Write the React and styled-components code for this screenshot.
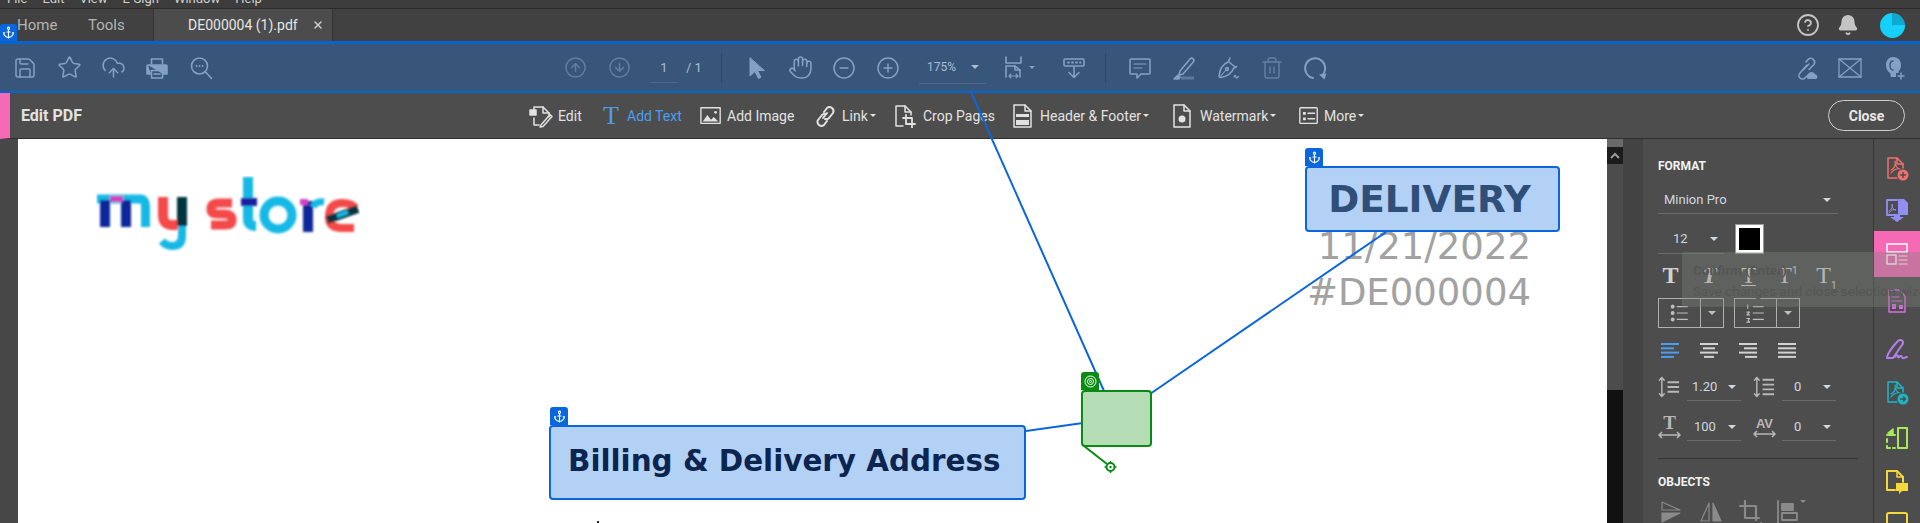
import React from "react";
import styled, { createGlobalStyle } from "styled-components";
import {
  Anchor,
  ArrowDownCircle,
  ArrowUpCircle,
  Bell,
  CircleHelp,
  CircleMinus,
  CirclePlus,
  CloudUpload,
  Hand,
  Save,
  Star,
  Trash2,
  X,
} from "lucide-react";

const GlobalStyle = createGlobalStyle`
  html, body {
    margin: 0;
    height: 523px;
    overflow: hidden;
    background: #4a4a4a;
  }
  * { box-sizing: border-box; }
`;

const Glyph = ({ size = 24, stroke = 1.6, children }) => (
  <svg
    width={size}
    height={size}
    viewBox="0 0 24 24"
    fill="none"
    stroke="currentColor"
    strokeWidth={stroke}
    strokeLinecap="round"
    strokeLinejoin="round"
  >
    {children}
  </svg>
);

const Shell = styled.div`
  width: 1920px;
  height: 523px;
  position: relative;
  overflow: hidden;
  display: flex;
  flex-direction: column;
  font-family: Roboto, "Liberation Sans", sans-serif;
`;

const MenuBar = styled.div`
  height: 9px;
  background: #3c3c3c;
  border-bottom: 1px solid #2b2b2b;
  overflow: hidden;
  display: flex;
  gap: 15px;
  padding-left: 7px;
  color: #d0d0d0;
  font-size: 13px;
  line-height: 14px;
  span {
    margin-top: -8px;
  }
`;

const TabBar = styled.div`
  height: 32px;
  background: #414141;
  display: flex;
  align-items: center;
  padding-left: 17px;
  padding-right: 15px;
  font-size: 15px;
  color: #b4b4b4;
`;

const NavTab = styled.div`
  width: 71px;
`;

const FileTab = styled.div`
  width: 180px;
  height: 100%;
  margin-left: -6px;
  background: #4c4c4c;
  border-left: 1px solid #333;
  border-right: 1px solid #333;
  display: flex;
  align-items: center;
  justify-content: space-between;
  padding: 0 8px 0 34px;
  color: #e4e4e4;
  font-size: 14px;
`;

const TopIcons = styled.div`
  margin-left: auto;
  display: flex;
  align-items: center;
  gap: 17px;
  color: #c4c4c4;
`;

const Avatar = styled.div`
  width: 25px;
  height: 25px;
  border-radius: 50%;
  margin-left: 4px;
  background: conic-gradient(#10a8cc 0 25%, #14d0fa 25% 100%);
`;

const Toolbar = styled.div`
  height: 52px;
  position: relative;
  background: #38567a;
  border-top: 3px solid #0a62cc;
  border-bottom: 2px solid #0a62cc;
  display: flex;
  align-items: stretch;
  padding-left: 3px;
  color: #84a0c4;
`;

const AnchorTag = styled.div`
  position: absolute;
  width: ${(p) => p.$size || 18}px;
  height: ${(p) => p.$size || 18}px;
  background: ${(p) => p.$color || "#0a66dc"};
  border-radius: 3px 3px 0 0;
  color: #fff;
  display: flex;
  align-items: center;
  justify-content: center;
  left: ${(p) => p.$left ?? -1}px;
  top: ${(p) => p.$top ?? -20}px;
`;

const ToolGroup = styled.div`
  display: flex;
  align-items: stretch;
  margin-left: ${(p) => p.$offset || 0}px;
`;

const ToolButton = styled.div`
  width: 44px;
  display: flex;
  align-items: center;
  justify-content: center;
  gap: 2px;
  margin-left: ${(p) => p.$gap || 0}px;
  color: ${(p) => (p.$dim ? "#617fa5" : "inherit")};
`;

const PageInfo = styled.div`
  width: 62px;
  margin-left: 9px;
  display: flex;
  align-items: center;
  gap: 8px;
  color: #a9bcd6;
  font-size: 13px;
`;

const PageNumber = styled.span`
  width: 28px;
  height: 27px;
  text-align: center;
  line-height: 23px;
  border-bottom: 1px solid #4a688e;
  margin-top: 4px;
`;

const ToolSeparator = styled.div`
  width: 1px;
  margin: 9px 12px 8px 9px;
  background: #2b4565;
`;

const ZoomField = styled.div`
  width: 68px;
  height: 33px;
  margin: 7px 0 0 9px;
  padding: 0 8px;
  display: flex;
  align-items: center;
  justify-content: space-between;
  border-bottom: 1px solid #4a688e;
  color: #a9bcd6;
  font-size: 12px;
`;

const Caret = styled.i`
  display: block;
  flex: none;
  width: 0;
  height: 0;
  border-left: ${(p) => p.$size || 4}px solid transparent;
  border-right: ${(p) => p.$size || 4}px solid transparent;
  border-top: ${(p) => p.$size || 4}px solid ${(p) => p.$color || "currentColor"};
`;

const EditBar = styled.div`
  height: 46px;
  display: flex;
  align-items: center;
  background: #4d4d4d;
  border-left: 10px solid #f569b5;
  border-bottom: 1px solid #2f2f2f;
  color: #e2e2e2;
  font-size: 14px;
`;

const EditTitle = styled.div`
  width: 519px;
  padding-left: 11px;
  font-size: 16px;
  font-weight: 700;
`;

const EditItem = styled.div`
  flex: none;
  width: ${(p) => p.$width}px;
  display: flex;
  align-items: center;
  gap: 2px;
  white-space: nowrap;
  color: ${(p) => (p.$active ? "#4c9df0" : "inherit")};
`;

const EditSlot = styled.div`
  flex: none;
  width: ${(p) => p.$width}px;
  margin-left: ${(p) => p.$nudge || 0}px;
  margin-right: -2px;
  display: flex;
  align-items: center;
`;

const AddTextGlyph = styled.span`
  font-family: "Liberation Serif", serif;
  font-size: 26px;
  line-height: 26px;
`;

const CloseButton = styled.div`
  width: 77px;
  height: 31px;
  margin-left: auto;
  margin-right: 15px;
  border: 1px solid #cfcfcf;
  border-radius: 16px;
  display: flex;
  align-items: center;
  justify-content: center;
  font-weight: 700;
  color: #e8e8e8;
`;

const Workspace = styled.div`
  flex: 1;
  display: flex;
  overflow: hidden;
`;

const LeftGutter = styled.div`
  width: 18px;
  background: #474747;
`;

const Page = styled.div`
  width: 1589px;
  position: relative;
  background: #fff;
`;

const DocHeader = styled.div`
  display: flex;
  justify-content: space-between;
  align-items: flex-start;
  padding: 37px 76px 0 78px;
`;

const DocMeta = styled.div`
  margin-top: 48px;
  text-align: right;
  font-family: "DejaVu Sans", sans-serif;
  font-size: 37px;
  line-height: 46px;
  color: #a2a2a2;
`;

const DocMark = styled.div`
  width: 2px;
  height: 2px;
  margin: 205px 0 0 579px;
  background: #222;
`;

const Annotation = styled.div`
  position: absolute;
  z-index: 3;
  left: ${(p) => p.$left}px;
  top: ${(p) => p.$top}px;
  width: ${(p) => p.$width}px;
  height: ${(p) => p.$height}px;
  display: flex;
  align-items: center;
  justify-content: ${(p) => (p.$center ? "center" : "flex-start")};
  padding-left: ${(p) => p.$pad || 0}px;
  padding-right: ${(p) => p.$padRight || 0}px;
  padding-bottom: ${(p) => p.$lift || 0}px;
  background: #b3d1f5;
  border: 2px solid #0a66dc;
  border-radius: 4px;
  font-family: "DejaVu Sans", sans-serif;
  font-weight: 700;
  font-size: ${(p) => p.$font}px;
  color: ${(p) => p.$ink};
`;

const TargetBox = styled(Annotation)`
  background: #b5ddb5;
  border-color: #0a8a12;
`;

const Scroller = styled.div`
  width: 16px;
  background: #111;
  display: flex;
  flex-direction: column;
`;

const ScrollCap = styled.div`
  height: 8px;
  background: #6a6a6a;
`;

const ScrollArrow = styled.div`
  height: 17px;
  background: #1c1c1c;
  color: #999;
  display: flex;
  align-items: center;
  justify-content: center;
`;

const ScrollThumb = styled.div`
  height: 226px;
  background: #4c4c4c;
`;

const SideGutter = styled.div`
  width: 20px;
  background: #434343;
`;

const FormatPanel = styled.div`
  width: 230px;
  padding: 0 15px;
  background: #4d4d4d;
  color: #cfd6dc;
  font-size: 13px;
`;

const SectionTitle = styled.div`
  margin-top: ${(p) => p.$top}px;
  height: 14px;
  line-height: 14px;
  font-size: 12px;
  font-weight: 700;
  color: #f2f2f2;
`;

const Dropdown = styled.div`
  width: ${(p) => p.$width}px;
  height: ${(p) => p.$height || 28}px;
  display: flex;
  align-items: center;
  justify-content: space-between;
  padding: 0 ${(p) => p.$right || 6}px 0 ${(p) => p.$left || 6}px;
  border-bottom: 1px solid #6a6a6a;
  color: #cfd8e0;
`;

const FontRow = styled(Dropdown)`
  margin-top: 13px;
`;

const Row = styled.div`
  display: flex;
  align-items: ${(p) => p.$align || "center"};
  gap: ${(p) => p.$gap || 0}px;
  height: ${(p) => p.$height}px;
  margin-top: ${(p) => p.$top}px;
  margin-left: ${(p) => p.$shift || 0}px;
`;

const Swatch = styled.div`
  width: 29px;
  height: 30px;
  background: #000;
  border: 4px solid #fff;
  outline: 1px solid #999;
  outline-offset: -1px;
`;

const StyleCell = styled.div`
  width: 39px;
  display: flex;
  justify-content: center;
  color: ${(p) => (p.$active ? "#4c9df0" : "#d2d2d2")};
`;

const StyleT = styled.span`
  position: relative;
  font-family: "Liberation Serif", serif;
  font-size: 24px;
  line-height: 26px;
  font-weight: ${(p) => (p.$bold ? 700 : 400)};
  font-style: ${(p) => (p.$italic ? "italic" : "normal")};
  text-decoration: ${(p) => (p.$under ? "underline" : "none")};
  text-underline-offset: 2px;
  text-decoration-thickness: 1px;
  sup, sub {
    font-family: Roboto, sans-serif;
    font-size: 10px;
    line-height: 0;
  }
`;

const ListBox = styled.div`
  width: 66px;
  height: 30px;
  display: grid;
  grid-template-columns: 41px 1fr;
  border: 1px solid #b0b0b0;
  color: #bdbdbd;
  > div {
    display: flex;
    align-items: center;
    justify-content: center;
  }
  > div + div {
    border-left: 1px solid #b0b0b0;
  }
`;

const SpacingIcon = styled.div`
  width: 23px;
  margin-left: ${(p) => p.$left || 0}px;
  margin-right: 6px;
  color: #b8b8b8;
  display: flex;
  justify-content: center;
`;

const Divider = styled.div`
  width: 200px;
  height: 1px;
  margin-top: 17px;
  background: #363636;
`;

const ObjectIcon = styled.div`
  width: 40px;
  color: #8a8a8a;
  display: flex;
  justify-content: center;
`;

const Rail = styled.div`
  width: 47px;
  padding-top: 10px;
  background: #4d4d4d;
  border-left: 1px solid #383838;
`;

const RailItem = styled.div`
  height: ${(p) => p.$h}px;
  display: flex;
  align-items: center;
  justify-content: center;
  color: ${(p) => p.$color};
  background: ${(p) => p.$bg || "none"};
`;

const HintBox = styled.div`
  position: absolute;
  z-index: 5;
  left: 1682px;
  top: 252px;
  width: 238px;
  height: 55px;
  padding: 8px 0 0 11px;
  background: rgba(125, 132, 125, 0.36);
  color: #565656;
  font-size: 13.5px;
  white-space: nowrap;
  line-height: 21px;
  strong {
    display: block;
    font-size: 13.5px;
  }
`;

const Connectors = styled.svg`
  position: absolute;
  z-index: 2;
  left: 0;
  top: 0;
  pointer-events: none;
`;

// logo is a picture in the pdf, so it is soft like a scaled bitmap
const Logo = () => (
  <svg width="264" height="78" viewBox="0 0 264 78" fill="none" strokeLinecap="butt">
    <defs>
      <filter id="soft">
        <feGaussianBlur stdDeviation="0.8" />
      </filter>
    </defs>
    <g filter="url(#soft)">
      <path d="M1 23 H44 Q49.500 23 49.500 30 V51" stroke="#14b8e6" strokeWidth="9" />
      <path d="M9 24 V51 M30 24 V51" stroke="#10259c" strokeWidth="10" />
      <path d="M14 23 H27" stroke="#d042c0" strokeWidth="6" />
      <path d="M67 21 V39 Q67 49 76 49 H84" stroke="#f4484a" strokeWidth="10" />
      <path d="M86 21 V50" stroke="#06363f" strokeWidth="10" />
      <path d="M86 50 V60 Q86 70 76 70 Q70 70 66 65" stroke="#14b8e6" strokeWidth="8" />
      <path d="M136 27 H122 Q115 27 115 33 Q115 38 122 38 H129 Q136 38 136 44 Q136 49 129 49 H115" stroke="#f4484a" strokeWidth="9" />
      <path d="M152 1 V43 Q152 50 160 50" stroke="#14b8e6" strokeWidth="10" />
      <path d="M145 26 H161" stroke="#1a1aa0" strokeWidth="8" />
      <circle cx="182" cy="39" r="14" stroke="#14b8e6" strokeWidth="9" />
      <path d="M212 25 V56" stroke="#10259c" strokeWidth="10" />
      <path d="M204 26 H212" stroke="#d042c0" strokeWidth="6" />
      <path d="M217 31 Q220 25 228 26" stroke="#14b8e6" strokeWidth="7" />
      <path d="M233 41 Q233 27 246 27 Q256 27 259 32 M233 41 Q233 52 246 52 H258" stroke="#f4484a" strokeWidth="8" />
      <path d="M231 44 L262 33" stroke="#06363f" strokeWidth="8" />
      <path d="M241 40 L252 36" stroke="#14b8e6" strokeWidth="4" />
    </g>
  </svg>
);

const PrintIcon = () => (
  <Glyph>
    <path d="M6.5 8V3h11v5" />
    <path d="M3 9h18a1 1 0 0 1 1 1v8h-4M6 18H2v-8a1 1 0 0 1 1-1" fill="currentColor" />
    <path d="M6.5 14.5h11V22h-11z" />
    <path d="M9 18h6" />
  </Glyph>
);

const FindIcon = () => (
  <Glyph>
    <circle cx="10.5" cy="10" r="8" />
    <path d="M16.5 16l6 6.5" />
    <path d="M7.5 10h.1M10.5 10h.1M13.5 10h.1" strokeWidth="1.8" />
  </Glyph>
);

const PointerIcon = () => (
  <Glyph stroke={1}>
    <path d="M6 2v18l5-4.5 3.5 7 2.5-1.3-3.4-6.7H20z" fill="currentColor" />
  </Glyph>
);

const FitIcon = () => (
  <Glyph>
    <path d="M3 1v6h15V1" />
    <path d="M3 21V10h9l5 4v7" />
    <path d="M12 10v4h5" />
    <path d="M6 20h9M6 20l2-2M6 20l2 2M15 20l-2-2M15 20l-2 2" strokeWidth="1.1" />
  </Glyph>
);

const SnapIcon = () => (
  <Glyph>
    <rect x="2" y="3" width="20" height="7" rx="1" />
    <path d="M6 6.5h1M10 6.5h1M14 6.5h1M18 6.5h.5" strokeWidth="1.8" />
    <path d="M12 11v10M7 16.5l5 5 5-5" />
  </Glyph>
);

const CommentIcon = () => (
  <Glyph>
    <path d="M3 3h18a1 1 0 0 1 1 1v13a1 1 0 0 1-1 1h-8l-4 4v-4H3a1 1 0 0 1-1-1V4a1 1 0 0 1 1-1z" />
    <path d="M6 8h12M6 12h8" strokeWidth="1.2" />
  </Glyph>
);

const MarkerIcon = () => (
  <Glyph>
    <path d="M8 15L18 3a2.2 2.2 0 0 1 3.3 3L11 18l-4 1z" />
    <path d="M2 23l4-4 2 2-1 2z" fill="currentColor" />
    <path d="M9 22h13" stroke="#5a7aa0" strokeWidth="3" strokeLinecap="butt" />
  </Glyph>
);

const SignIcon = () => (
  <Glyph>
    <path d="M14 2l-2 4c-5 2-8 6-9 14 0 1 .5 1.5 1.5 1.5 7-1 11-4 13-9l3-2" />
    <path d="M13 6l6 5" />
    <path d="M4 21l6-7" strokeWidth="1.1" />
    <circle cx="11" cy="13" r="1.4" />
    <path d="M18 21c1-2 1.5-2 2 0s1 1 2.5-.5" strokeWidth="1.3" />
  </Glyph>
);

const RotateIcon = () => (
  <Glyph stroke={2}>
    <path d="M18.5 19a10 10 0 1 0-9.5 3" />
    <path d="M15 18.5l7.5-1-2 6z" fill="currentColor" stroke="none" />
  </Glyph>
);

const ShareIcon = () => (
  <Glyph>
    <path d="M12 6l2.5-3a4 4 0 0 1 5.5 5.500L15 13.500" />
    <path d="M13 9l-7 8a3.500 3.500 0 0 0 5 5l2-2" />
    <path d="M9 14l6-6" />
    <path d="M14 23a3 3 0 0 1 0-5 4 4 0 0 1 7 0 3 3 0 0 1 1.500 5z" fill="currentColor" stroke="none" />
  </Glyph>
);

const EnvelopeIcon = () => (
  <Glyph stroke={1.3}>
    <rect x="1" y="3" width="22" height="18" />
    <path d="M1 3l22 18M23 3L1 21" />
  </Glyph>
);

const InviteIcon = () => (
  <Glyph>
    <path
      d="M11 1c5.500 0 8 4 8 8 0 3-1 5-2.500 6.500V17H14v4H9l-1-4c-3-2-4-5-4-8 0-4.500 3-8 7-8z"
      fill="currentColor"
      stroke="none"
    />
    <path d="M11 5c-2 0-3 2-3 4.500S9 14 11 14" stroke="#38567a" strokeWidth="1.4" />
    <path d="M19 17v6M16 20h6" strokeWidth="1.5" />
  </Glyph>
);

const EditDocIcon = () => (
  <Glyph size={24} stroke={1.5}>
    <path d="M5 9V3h9l6 6v4" />
    <path d="M14 3v6h6" />
    <path d="M1 6h6v5H1z" fill="currentColor" />
    <path d="M5 14v7h5" />
    <path d="M12 21l-1 2 3-.5 9-10-2-2z" />
  </Glyph>
);

const ImageIcon = () => (
  <Glyph size={22} stroke={1.5}>
    <rect x="1" y="3" width="21" height="17" />
    <path d="M3 18l5-7 4 5 3-3 5 5z" fill="currentColor" stroke="none" />
    <circle cx="17" cy="8" r="1.500" fill="currentColor" stroke="none" />
  </Glyph>
);

const LinkIcon = () => (
  <Glyph size={24} stroke={2}>
    <path d="M10 14l4-5" />
    <path d="M11 8l3-4a4 4 0 0 1 6 5l-4 5a4 4 0 0 1-4 1" />
    <path d="M13 10a4 4 0 0 0-4 1l-4 5a4 4 0 0 0 6 5l3-4" />
  </Glyph>
);

const CropDocIcon = () => (
  <Glyph size={24} stroke={1.5}>
    <path d="M10 22H3V2h9l6 6v3" />
    <path d="M12 2v6h6" />
    <path d="M13 11v9h9M10 14h9v10" strokeWidth="1.800" />
  </Glyph>
);

const HeaderDocIcon = () => (
  <Glyph size={24} stroke={1.5}>
    <path d="M3 1h11l6 6v16H3z" />
    <path d="M14 1v6h6" />
    <path d="M5 10h13v3H5z M5 16h13v5H5z" fill="currentColor" stroke="none" />
  </Glyph>
);

const WatermarkIcon = () => (
  <Glyph size={24} stroke={1.5}>
    <path d="M4 1h10l6 6v16H4z" />
    <path d="M14 1v6h6" />
    <circle cx="12" cy="15" r="3.500" fill="currentColor" stroke="none" />
  </Glyph>
);

const MoreIcon = () => (
  <Glyph size={22} stroke={1.5}>
    <rect x="2" y="3" width="19" height="17" rx="1" />
    <path d="M5.500 7.500h3v3h-3zM5.500 13.500h3v3h-3z" fill="currentColor" stroke="none" />
    <path d="M11 9h7M11 15h7" strokeWidth="1.800" />
  </Glyph>
);

const BulletList = () => (
  <Glyph size={22} stroke={1.3}>
    <circle cx="4" cy="5" r="1.500" fill="currentColor" />
    <circle cx="4" cy="12" r="1.500" fill="currentColor" />
    <circle cx="4" cy="19" r="1.500" fill="currentColor" />
    <path d="M9 5h11M9 12h11M9 19h11" />
  </Glyph>
);

const NumberList = () => (
  <Glyph size={22} stroke={1.3}>
    <path d="M3 3v4M2 11h3l-3 3h3M2 18h3l-1.500 2 1.500 2H2" strokeWidth="1.200" />
    <path d="M9 5h11M9 12h11M9 19h11" />
  </Glyph>
);

const AlignIcon = ({ lines }) => (
  <svg width="19" height="15" viewBox="0 0 19 15" fill="none" stroke="currentColor" strokeWidth="2">
    {lines.map(([x1, x2], i) => (
      <path key={i} d={`M${x1} ${1 + i * 4.3}H${x2}`} />
    ))}
  </svg>
);

const LineSpacingIcon = ({ thick }) => (
  <Glyph size={24} stroke={1.500}>
    <path d="M4 3v18M1.500 5L4 2l2.500 3M1.500 19L4 22l2.500-3" />
    <path
      d={thick ? "M10 4.500h12M10 9.500h12M10 14.500h12M10 19.500h12" : "M10 7h12M10 12h12M10 17h12"}
      strokeWidth="2"
      strokeLinecap="butt"
    />
  </Glyph>
);

const ScaleLabel = styled.div`
  display: flex;
  flex-direction: column;
  align-items: center;
  font-family: "Liberation Serif", serif;
  font-weight: 700;
  font-size: 19px;
  line-height: 16px;
  svg {
    display: block;
  }
`;

const KernLabel = styled(ScaleLabel)`
  font-family: "Liberation Sans", sans-serif;
  font-size: 13px;
  line-height: 13px;
`;

const WidthArrow = () => (
  <svg width="23" height="8" viewBox="0 0 23 8" fill="none" stroke="currentColor" strokeWidth="1.500">
    <path d="M1 4h21M4 1L1 4l3 3M19 1l3 3-3 3" />
  </svg>
);

const FlipIcon = ({ side }) => (
  <Glyph size={24} stroke={1.200}>
    {side ? (
      <>
        <path d="M10 3L2 21h8z" />
        <path d="M14 3l8 18h-8z" fill="currentColor" />
      </>
    ) : (
      <>
        <path d="M3 2l18 8H3z" />
        <path d="M3 13h18L3 22z" fill="currentColor" />
      </>
    )}
  </Glyph>
);

const CropIcon = () => (
  <Glyph size={24} stroke={2.200}>
    <path d="M6 1v17h14M1 6h16v14" />
    <path d="M22 23h.1" />
  </Glyph>
);

const ArrangeIcon = () => (
  <Glyph size={24} stroke={1.800}>
    <path d="M2 1v23" />
    <path d="M6 4h11v6H6z" fill="currentColor" />
    <path d="M6 13h15v7H6z" />
  </Glyph>
);

const PdfMark = () => <path d="M6 13c3-1 5-5 4-9 0 4 2 8 5 8-3-1-7 1-9 4" strokeWidth="1.200" />;

const railItems = [
  {
    h: 40,
    color: "#f07070",
    icon: (
      <>
        <path d="M12 21H3V1h9l6 6v4" />
        <path d="M12 1v6h6" />
        <PdfMark />
        <circle cx="18" cy="18" r="5.500" fill="currentColor" stroke="none" />
        <path d="M18 15.500v5M15.500 18h5" stroke="#4d4d4d" />
      </>
    ),
  },
  {
    h: 42,
    color: "#8f8ff5",
    icon: (
      <>
        <path d="M12 17H2V2h10" strokeWidth="1.800" />
        <path d="M4 13c2-1 4-4 3-7 0 3 1 6 4 6-3-1-5 0-7 3" strokeWidth="1" />
        <path d="M13 1h6l4 4v12H13z" fill="currentColor" stroke="none" />
        <path d="M9 17h6v2h4l-7 5-7-5h4z" fill="currentColor" stroke="none" />
      </>
    ),
  },
  {
    h: 46,
    color: "#fff",
    bg: "#f569b5",
    icon: (
      <>
        <rect x="2" y="2" width="20" height="8" />
        <rect x="2" y="13" width="9" height="9" />
        <path d="M14 14h8M14 18h8M14 22h8" strokeWidth="1.100" />
      </>
    ),
  },
  {
    h: 48,
    color: "#d86be0",
    icon: (
      <>
        <path d="M4 1h10l6 6v16H4z" />
        <path d="M7 8h7M7 12h10" strokeWidth="1.200" />
        <path d="M7 15h4v5H7z M14 16h4v4h-4z" fill="currentColor" stroke="none" />
      </>
    ),
  },
  {
    h: 47,
    color: "#b47fe8",
    icon: (
      <>
        <path d="M2 21c0-4 6-12 11-17 3-3 7 1 4 4-3 4-6 9-9 13z" strokeWidth="2" />
        <path d="M10 20c2-3 3-2 3 0s3-3 4 0 3 0 5 0" strokeWidth="2" />
      </>
    ),
  },
  {
    h: 42,
    color: "#1cb6c6",
    icon: (
      <>
        <path d="M12 21H3V1h9l6 6v4" />
        <path d="M12 1v6h6" />
        <PdfMark />
        <circle cx="18" cy="18" r="5.500" fill="currentColor" stroke="none" />
        <path d="M15.500 18h5M18.500 16l2 2-2 2" stroke="#4d4d4d" />
      </>
    ),
  },
  {
    h: 48,
    color: "#a8e85a",
    icon: (
      <>
        <rect x="13" y="2" width="9" height="20" strokeWidth="2" />
        <path d="M2 9h8M2 13v3M2 20v2h3M8 22h2" strokeWidth="2" />
        <path d="M8 3L3 7l5 1z" fill="currentColor" />
      </>
    ),
  },
  {
    h: 40,
    color: "#f5d83a",
    icon: (
      <>
        <path d="M10 20H2V1h10l6 6v5" strokeWidth="2" />
        <path d="M12 1v6h6" />
        <path d="M11 13h12v8h-6l-3 3v-3h-3z" fill="currentColor" stroke="none" />
      </>
    ),
  },
  {
    h: 42,
    color: "#f5d83a",
    icon: <rect x="2" y="2" width="20" height="20" rx="2" strokeWidth="2" />,
  },
];

const aligns = [
  [[0, 18], [0, 13], [0, 18], [0, 13]],
  [[0, 18], [3, 15], [0, 18], [4, 14]],
  [[0, 18], [5, 18], [0, 18], [6, 18]],
  [[0, 18], [0, 18], [0, 18], [0, 18]],
];

const App = () => {
  return (
    <Shell>
      <GlobalStyle />
      <MenuBar>
        <span>File</span>
        <span>Edit</span>
        <span>View</span>
        <span>E-Sign</span>
        <span>Window</span>
        <span>Help</span>
      </MenuBar>
      <TabBar>
        <NavTab>Home</NavTab>
        <NavTab>Tools</NavTab>
        <FileTab>
          DE000004 (1).pdf
          <X size={12} strokeWidth={3} color="#ccc" />
        </FileTab>
        <TopIcons>
          <CircleHelp size={24} strokeWidth={1.8} />
          <Bell size={22} fill="currentColor" />
          <Avatar />
        </TopIcons>
      </TabBar>
      <Toolbar>
        <AnchorTag $left={0} $size={17}>
          <Anchor size={13} />
        </AnchorTag>
        <ToolGroup>
          <ToolButton><Save size={24} strokeWidth={1.5} /></ToolButton>
          <ToolButton><Star size={25} strokeWidth={1.5} /></ToolButton>
          <ToolButton><CloudUpload size={25} strokeWidth={1.5} /></ToolButton>
          <ToolButton><PrintIcon /></ToolButton>
          <ToolButton><FindIcon /></ToolButton>
        </ToolGroup>
        <ToolGroup $offset={330}>
          <ToolButton $dim><ArrowUpCircle size={23} strokeWidth={1.5} /></ToolButton>
          <ToolButton $dim><ArrowDownCircle size={23} strokeWidth={1.5} /></ToolButton>
          <PageInfo>
            <PageNumber>1</PageNumber>
            <span>/ 1</span>
          </PageInfo>
          <ToolSeparator />
          <ToolButton><PointerIcon /></ToolButton>
          <ToolButton><Hand size={25} strokeWidth={1.5} /></ToolButton>
          <ToolButton><CircleMinus size={24} strokeWidth={1.5} /></ToolButton>
          <ToolButton><CirclePlus size={24} strokeWidth={1.5} /></ToolButton>
          <ZoomField>
            175%
            <Caret />
          </ZoomField>
          <ToolButton $gap={10}>
            <FitIcon />
            <Caret $size={3} />
          </ToolButton>
          <ToolButton $gap={11}><SnapIcon /></ToolButton>
          <ToolSeparator />
          <ToolButton><CommentIcon /></ToolButton>
          <ToolButton><MarkerIcon /></ToolButton>
          <ToolButton><SignIcon /></ToolButton>
          <ToolButton $dim><Trash2 size={24} strokeWidth={1.5} /></ToolButton>
          <ToolButton><RotateIcon /></ToolButton>
        </ToolGroup>
        <ToolGroup $offset={446}>
          <ToolButton><ShareIcon /></ToolButton>
          <ToolButton><EnvelopeIcon /></ToolButton>
          <ToolButton><InviteIcon /></ToolButton>
        </ToolGroup>
      </Toolbar>
      <EditBar>
        <EditTitle>Edit PDF</EditTitle>
        <EditItem $width={74}><EditSlot $width={29}><EditDocIcon /></EditSlot>Edit</EditItem>
        <EditItem $width={97} $active><EditSlot $width={24}><AddTextGlyph>T</AddTextGlyph></EditSlot>Add Text</EditItem>
        <EditItem $width={113}><EditSlot $width={27}><ImageIcon /></EditSlot>Add Image</EditItem>
        <EditItem $width={83}><EditSlot $width={29}><LinkIcon /></EditSlot>Link<Caret $size={3} /></EditItem>
        <EditItem $width={118}><EditSlot $width={30} $nudge={-3}><CropDocIcon /></EditSlot>Crop Pages</EditItem>
        <EditItem $width={160}><EditSlot $width={29} $nudge={-3}><HeaderDocIcon /></EditSlot>Header &amp; Footer<Caret $size={3} /></EditItem>
        <EditItem $width={124}><EditSlot $width={30} $nudge={-4}><WatermarkIcon /></EditSlot>Watermark<Caret $size={3} /></EditItem>
        <EditItem $width={80}><EditSlot $width={26}><MoreIcon /></EditSlot>More<Caret $size={3} /></EditItem>
        <CloseButton>Close</CloseButton>
      </EditBar>
      <Workspace>
        <LeftGutter />
        <Page>
          <DocHeader>
            <Logo />
            <DocMeta>
              <div>11/21/2022</div>
              <div>#DE000004</div>
            </DocMeta>
          </DocHeader>
          <DocMark />
          <Annotation $left={1287} $top={27} $width={255} $height={66} $font={37.4} $ink="#2f4f78" $center $padRight={6}>
            <AnchorTag $size={18} $top={-20} $left={-2}>
              <Anchor size={13} />
            </AnchorTag>
            DELIVERY
          </Annotation>
          <Annotation $left={531} $top={286} $width={477} $height={75} $font={29.4} $ink="#0b2550" $pad={17} $lift={3}>
            <AnchorTag $size={18} $top={-20} $left={-1}>
              <Anchor size={13} />
            </AnchorTag>
            Billing &amp; Delivery Address
          </Annotation>
          <TargetBox $left={1063} $top={251} $width={71} $height={57}>
            <AnchorTag $size={18} $top={-20} $left={-2} $color="#0a8a12">
              <svg width="13" height="13" viewBox="0 0 13 13" fill="none" stroke="#fff" strokeWidth="1">
                <circle cx="6.500" cy="6.500" r="5.500" />
                <circle cx="6.500" cy="6.500" r="3" />
                <circle cx="6.500" cy="6.500" r="1" />
              </svg>
            </AnchorTag>
          </TargetBox>
        </Page>
        <Scroller>
          <ScrollCap />
          <ScrollArrow>
            <svg width="10" height="7" viewBox="0 0 10 7" fill="none" stroke="currentColor" strokeWidth="2">
              <path d="M1 6l4-4 4 4" />
            </svg>
          </ScrollArrow>
          <ScrollThumb />
        </Scroller>
        <SideGutter />
        <FormatPanel>
          <SectionTitle $top={20}>FORMAT</SectionTitle>
          <FontRow $width={180} $right={7}>
            Minion Pro
            <Caret $size={4} />
          </FontRow>
          <Row $height={30} $top={10} $gap={11}>
            <Dropdown $width={66} $height={30} $left={15} $right={6}>
              12
              <Caret />
            </Dropdown>
            <Swatch />
          </Row>
          <Row $height={30} $top={6} $shift={-7}>
            <StyleCell><StyleT $bold>T</StyleT></StyleCell>
            <StyleCell><StyleT $italic $bold>T</StyleT></StyleCell>
            <StyleCell><StyleT $under>T</StyleT></StyleCell>
            <StyleCell><StyleT>T<sup>1</sup></StyleT></StyleCell>
            <StyleCell><StyleT>T<sub>1</sub></StyleT></StyleCell>
          </Row>
          <Row $height={30} $top={8} $gap={10}>
            <ListBox>
              <div><BulletList /></div>
              <div><Caret /></div>
            </ListBox>
            <ListBox>
              <div><NumberList /></div>
              <div><Caret /></div>
            </ListBox>
          </Row>
          <Row $height={15} $top={15} $shift={-7}>
            {aligns.map((lines, i) => (
              <StyleCell key={i} $active={i === 0}>
                <AlignIcon lines={lines} />
              </StyleCell>
            ))}
          </Row>
          <Row $height={28} $top={15}>
            <SpacingIcon><LineSpacingIcon /></SpacingIcon>
            <Dropdown $width={54} $left={5} $right={5}>1.20<Caret /></Dropdown>
            <SpacingIcon $left={12}><LineSpacingIcon thick /></SpacingIcon>
            <Dropdown $width={54} $left={12} $right={5}>0<Caret /></Dropdown>
          </Row>
          <Row $height={28} $top={12}>
            <SpacingIcon>
              <ScaleLabel>T<WidthArrow /></ScaleLabel>
            </SpacingIcon>
            <Dropdown $width={54} $left={7} $right={5}>100<Caret /></Dropdown>
            <SpacingIcon $left={12}>
              <KernLabel>AV<WidthArrow /></KernLabel>
            </SpacingIcon>
            <Dropdown $width={54} $left={12} $right={5}>0<Caret /></Dropdown>
          </Row>
          <Divider />
          <SectionTitle $top={16}>OBJECTS</SectionTitle>
          <Row $height={24} $top={11} $align="flex-start" $shift={-7}>
            <ObjectIcon><FlipIcon /></ObjectIcon>
            <ObjectIcon><FlipIcon side /></ObjectIcon>
            <ObjectIcon><CropIcon /></ObjectIcon>
            <ObjectIcon><ArrangeIcon /><Caret $size={3} /></ObjectIcon>
          </Row>
        </FormatPanel>
        <Rail>
          {railItems.map((item, i) => (
            <RailItem key={i} $h={item.h} $color={item.color} $bg={item.bg}>
              <Glyph size={24} stroke={1.500}>{item.icon}</Glyph>
            </RailItem>
          ))}
        </Rail>
      </Workspace>
      <HintBox>
        <strong>Confirm (Enter)</strong>
        Save changes and close selection wizard
      </HintBox>
      <Connectors width="1920" height="523" fill="none">
        <path d="M971 92L1104 391" stroke="#0a66dc" strokeWidth="2" />
        <path d="M1150 394L1386 232" stroke="#0a66dc" strokeWidth="2" />
        <path d="M1026 431L1083 423" stroke="#0a66dc" strokeWidth="2" />
        <path d="M1084 446L1107 464" stroke="#0a8a12" strokeWidth="2" />
        <circle cx="1110.500" cy="467" r="4" stroke="#0a8a12" strokeWidth="2" fill="#fff" />
        <circle cx="1110.500" cy="467" r="1.200" fill="#0a8a12" />
        <path d="M1110.500 461v2M1110.500 471v2M1104.500 467h2M1114.500 467h2" stroke="#0a8a12" strokeWidth="1.500" />
      </Connectors>
    </Shell>
  );
};

export default App;
